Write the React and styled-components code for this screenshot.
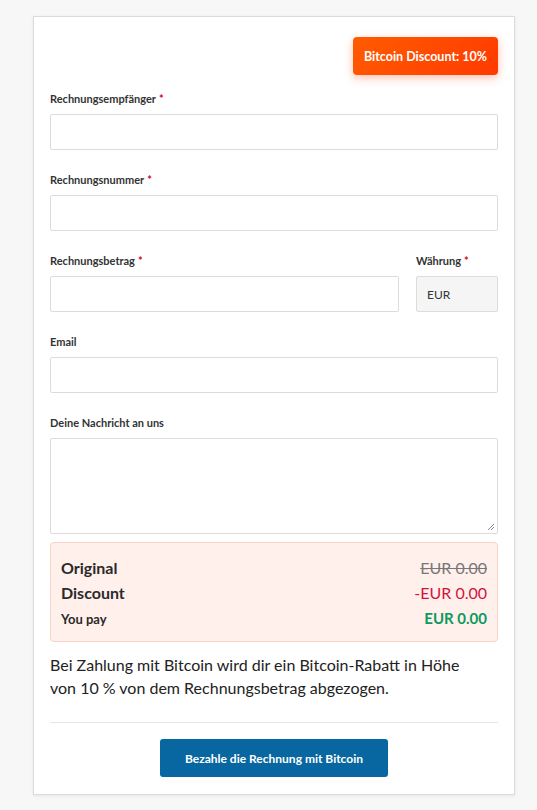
import React from "react";
import styled, { createGlobalStyle } from "styled-components";

const GlobalStyle = createGlobalStyle`
  html, body {
    margin: 0;
    padding: 0;
    background: #f7f7f7;
    font-family: "Lato", "Open Sans", sans-serif;
  }
  * { box-sizing: border-box; }
`;

const Page = styled.div`
  padding: 16px 22px 15px 33px;
`;

const Card = styled.div`
  width: 482px;
  background: #fff;
  border: 1px solid #dcdcdc;
  box-shadow: 0 1px 3px rgba(0, 0, 0, 0.08);
  padding: 20px 16px 17px 16px;
`;

const BadgeRow = styled.div`
  display: flex;
  justify-content: flex-end;
  margin-bottom: 16px;
`;

const Badge = styled.div`
  height: 38px;
  width: 145px;
  display: flex;
  align-items: center;
  justify-content: center;
  border-radius: 4px;
  color: #fff;
  font-weight: 700;
  font-size: 12.5px;
  background: linear-gradient(135deg, #ff5c00, #ff3a00);
  box-shadow: 0 3px 8px rgba(255, 80, 20, 0.35);
`;

const Row = styled.div`
  display: flex;
  gap: 17px;
`;

const Field = styled.div`
  flex: ${(p) => (p.$narrow ? "0 0 82px" : "1")};
  margin-bottom: 22px;
`;

const Label = styled.div`
  font-size: 11px;
  font-weight: 700;
  color: #333;
  height: 16px;
  line-height: 16px;
  margin-bottom: 7px;
`;

const Req = styled.span`
  color: #d0021b;
  margin-left: 3px;
`;

const Input = styled.div`
  height: 36px;
  border: 1px solid #dcdcdc;
  border-radius: 2px;
  background: ${(p) => (p.$readonly ? "#f5f5f5" : "#fff")};
  font-size: 12px;
  color: #333;
  display: flex;
  align-items: center;
  padding: 0 10px;
`;

const TextArea = styled.div`
  position: relative;
  height: 96px;
  border: 1px solid #dcdcdc;
  border-radius: 2px;
  background: #fff;
`;

const Grip = styled.svg`
  position: absolute;
  right: 2px;
  bottom: 2px;
`;

const Summary = styled.div`
  margin-top: -14px;
  background: #fff0ec;
  border: 1px solid #fbd4c6;
  border-radius: 4px;
  padding: 12px 10px 9px 10px;
`;

const SumRow = styled.div`
  display: flex;
  justify-content: space-between;
  align-items: baseline;
  font-size: ${(p) => (p.$small ? "13px" : "16px")};
  line-height: ${(p) => (p.$small ? "26px" : "25px")};
  font-weight: 700;
  color: #2a2a2a;
`;

const Value = styled.span`
  font-weight: ${(p) => (p.$bold ? 700 : 400)};
  font-size: ${(p) => (p.$bold ? "15px" : "inherit")};
  color: ${(p) => p.$color};
  text-decoration: ${(p) => (p.$strike ? "line-through" : "none")};
`;

const Note = styled.p`
  margin: 11px 0 0 0;
  padding-right: 30px;
  font-size: 16px;
  line-height: 23px;
  color: #222;
`;

const Divider = styled.hr`
  border: none;
  border-top: 1px solid #e6e6e6;
  margin: 23px 0 16px 0;
`;

const Center = styled.div`
  display: flex;
  justify-content: center;
`;

const PayButton = styled.button`
  width: 228px;
  height: 38px;
  border: none;
  border-radius: 3px;
  background: #0867a0;
  color: #fff;
  font-family: inherit;
  font-weight: 700;
  font-size: 12px;
  cursor: pointer;
`;

const App = () => (
  <>
    <GlobalStyle />
    <Page>
      <Card>
        <BadgeRow>
          <Badge>Bitcoin Discount: 10%</Badge>
        </BadgeRow>

        <Field>
          <Label>
            Rechnungsempfänger<Req>*</Req>
          </Label>
          <Input />
        </Field>

        <Field>
          <Label>
            Rechnungsnummer<Req>*</Req>
          </Label>
          <Input />
        </Field>

        <Row>
          <Field>
            <Label>
              Rechnungsbetrag<Req>*</Req>
            </Label>
            <Input />
          </Field>
          <Field $narrow>
            <Label>
              Währung<Req>*</Req>
            </Label>
            <Input $readonly>EUR</Input>
          </Field>
        </Row>

        <Field>
          <Label>Email</Label>
          <Input />
        </Field>

        <Field>
          <Label>Deine Nachricht an uns</Label>
          <TextArea>
            <Grip width="9" height="9" viewBox="0 0 9 9">
              <path d="M8 2 L2 8 M8 5 L5 8" stroke="#888" strokeWidth="1" />
            </Grip>
          </TextArea>
        </Field>

        <Summary>
          <SumRow>
            <span>Original</span>
            <Value $strike $color="#777">EUR 0.00</Value>
          </SumRow>
          <SumRow>
            <span>Discount</span>
            <Value $color="#d3123c">-EUR 0.00</Value>
          </SumRow>
          <SumRow $small>
            <span>You pay</span>
            <Value $bold $color="#0b9a5d">EUR 0.00</Value>
          </SumRow>
        </Summary>

        <Note>
          Bei Zahlung mit Bitcoin wird dir ein Bitcoin-Rabatt in Höhe von 10 %
          von dem Rechnungsbetrag abgezogen.
        </Note>

        <Divider />

        <Center>
          <PayButton>Bezahle die Rechnung mit Bitcoin</PayButton>
        </Center>
      </Card>
    </Page>
  </>
);

export default App;
